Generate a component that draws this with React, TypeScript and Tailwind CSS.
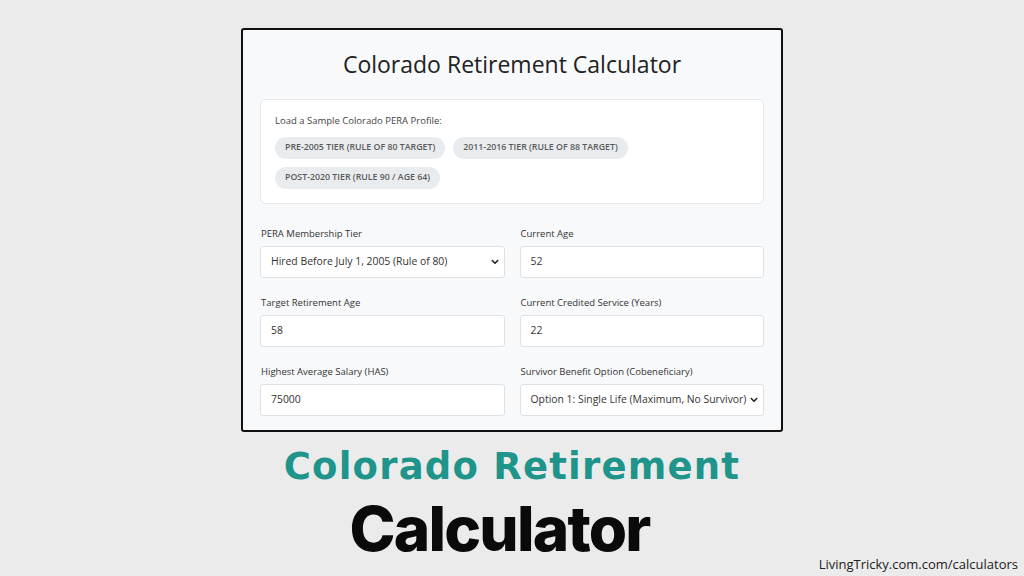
import React from "react";

function Chevron() {
  return (
    <svg width="8" height="6" viewBox="0 0 8 6" className="shrink-0">
      <path d="M1.3 1.5 L4 4.2 L6.7 1.5" fill="none" stroke="#222" strokeWidth="1.6" strokeLinecap="round" strokeLinejoin="round" />
    </svg>
  );
}

function Field({ label, children }: { label: string; children: React.ReactNode }) {
  return (
    <div className="flex flex-col">
      <div className="text-[9.5px] leading-[14px] font-medium text-[#333] mb-[5px] pl-[1px]">{label}</div>
      {children}
    </div>
  );
}

function TextBox({ value }: { value: string }) {
  return (
    <div className="h-[32px] bg-white border border-[#dee2e6] rounded-[3px] flex items-center px-[10px] text-[10.4px] text-[#333]">
      {value}
    </div>
  );
}

function SelectBox({ value }: { value: string }) {
  return (
    <div className="h-[32px] bg-white border border-[#dee2e6] rounded-[3px] flex items-center justify-between pl-[10px] pr-[5px] text-[10.4px] text-[#333]">
      <span className="whitespace-nowrap">{value}</span>
      <Chevron />
    </div>
  );
}

function Pill({ text }: { text: string }) {
  return (
    <div className="h-[22px] px-[10px] rounded-full bg-[#e9ecef] flex items-center text-[8.8px] font-semibold uppercase text-[#5a5a5a] whitespace-nowrap">
      {text}
    </div>
  );
}

export default function App() {
  return (
    <div className="relative w-[1024px] h-[576px] overflow-hidden bg-[#ebebeb] flex flex-col items-center font-['Open_Sans',sans-serif]">
      <div className="mt-[28px] w-[542px] border-2 border-[#111] rounded-[3px] bg-[#f8f9fa] px-[17px] pt-[18px] pb-[14px] flex flex-col">
        <h1 className="text-[23px] leading-[32px] text-center text-[#222]">Colorado Retirement Calculator</h1>
        <div className="mt-[19px] h-[105px] bg-white border border-[#e6e8eb] rounded-[6px] px-[14px] pt-[14px]">
          <div className="text-[9.5px] leading-[14px] text-[#444] mb-[9px]">Load a Sample Colorado PERA Profile:</div>
          <div className="flex flex-wrap gap-[8px]">
            <Pill text="Pre-2005 Tier (Rule of 80 Target)" />
            <Pill text="2011-2016 Tier (Rule of 88 Target)" />
            <Pill text="Post-2020 Tier (Rule 90 / Age 64)" />
          </div>
        </div>
        <div className="mt-[23px] grid grid-cols-2 gap-x-[15px] gap-y-[18px]">
          <Field label="PERA Membership Tier">
            <SelectBox value="Hired Before July 1, 2005 (Rule of 80)" />
          </Field>
          <Field label="Current Age">
            <TextBox value="52" />
          </Field>
          <Field label="Target Retirement Age">
            <TextBox value="58" />
          </Field>
          <Field label="Current Credited Service (Years)">
            <TextBox value="22" />
          </Field>
          <Field label="Highest Average Salary (HAS)">
            <TextBox value="75000" />
          </Field>
          <Field label="Survivor Benefit Option (Cobeneficiary)">
            <SelectBox value="Option 1: Single Life (Maximum, No Survivor)" />
          </Field>
        </div>
      </div>
      <div className="mt-[17px] text-[37px] leading-[36px] font-bold tracking-[1.2px] text-[#1f948a] font-['DejaVu_Sans',sans-serif] whitespace-nowrap">
        Colorado Retirement
      </div>
      <div className="mt-[13px] pr-[25px] text-[62px] leading-[62px] font-extrabold tracking-[-1.8px] text-[#0a0a0a] font-['Inter',sans-serif] whitespace-nowrap">
        Calculator
      </div>
      <div className="absolute right-[6px] bottom-[4px] text-[13px] leading-[16px] text-[#222] font-['Open_Sans',sans-serif]">
        LivingTricky.com.com/calculators
      </div>
    </div>
  );
}
